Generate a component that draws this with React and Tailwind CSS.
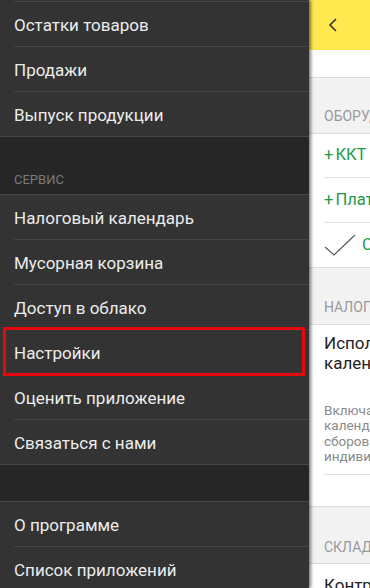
import React from "react";

const font = { fontFamily: "Roboto, 'Noto Sans', sans-serif" };

const Row = ({ children, last = false }) => (
  <div className="relative h-[45px]">
    <div className="h-[44px] flex items-center pl-[14px] pt-[3px] text-[17px] text-[#ececec]">
      {children}
    </div>
    {!last && <div className="ml-[14px] h-px bg-[#454545]" />}
  </div>
);

const Section = ({ height, label }) => (
  <div
    className={`${height} bg-[#262626] border-y border-[#484848] flex items-end pl-[14px] pb-[5px] text-[13px] text-[#7a7a7a]`}
  >
    {label}
  </div>
);

const App = () => {
  return (
    <div className="w-[370px] h-[588px] overflow-hidden flex bg-[#f2f2f2]" style={font}>
      {/* Drawer */}
      <div className="w-[309px] shrink-0 bg-[#333333] shadow-[2px_0_3px_rgba(0,0,0,0.5)] z-10">
        <div className="h-[2px] border-b border-[#454545] ml-[14px]" />
        <Row>Остатки товаров</Row>
        <Row>Продажи</Row>
        <div className="h-[44px] flex items-center pl-[14px] pt-[3px] text-[17px] text-[#ececec]">
          Выпуск продукции
        </div>
        <Section height="h-[59px]" label="СЕРВИС" />
        <Row>Налоговый календарь</Row>
        <Row>Мусорная корзина</Row>
        <Row>Доступ в облако</Row>
        <div className="relative h-[45px]">
          <div className="h-[44px] flex items-center pl-[14px] pt-[3px] text-[17px] text-[#ececec]">
            Настройки
          </div>
          <div className="absolute left-[3px] right-[4px] top-[-3px] bottom-[-1px] border-[3px] border-[#e5080f]" />
        </div>
        <Row>Оценить приложение</Row>
        <div className="h-[44px] flex items-center pl-[14px] pt-[3px] text-[17px] text-[#ececec]">
          Связаться с нами
        </div>
        <div className="h-[38px] bg-[#262626] border-y border-[#484848]" />
        <Row>О программе</Row>
        <Row last>Список приложений</Row>
      </div>

      {/* Right panel (clipped) */}
      <div className="flex-1 overflow-hidden">
        <div className="w-[360px]">
          <div className="h-[50px] bg-[#ffe94f] flex items-center pl-[18px]">
            <svg width="12" height="16" viewBox="0 0 12 16" fill="none">
              <path d="M9 2L3 8l6 6" stroke="#333" strokeWidth="1.6" />
            </svg>
          </div>
          <div className="h-[28px] bg-white border-b border-[#dcdcdc]" />
          <div className="h-[56px] flex items-end pl-[15px] pb-[6px] text-[14px] text-[#9a9a9a] border-b border-[#dcdcdc]">
            ОБОРУДОВАНИЕ
          </div>
          <div className="bg-white border-b border-[#dcdcdc]">
            <div className="ml-[15px] h-[44px] flex items-center text-[16.5px] text-[#1f9a4c] border-b border-[#e0e0e0]">
              <span className="mr-[2px]">+</span>ККТ
            </div>
            <div className="ml-[15px] h-[45px] flex items-center text-[16.5px] text-[#1f9a4c] border-b border-[#e0e0e0]">
              <span className="mr-[2px]">+</span>Платежный терминал
            </div>
            <div className="ml-[15px] h-[44px] flex items-center gap-[6px] text-[16.5px] text-[#1f9a4c]">
              <svg width="32" height="22" viewBox="0 0 32 22" fill="none">
                <path d="M1 13l9 8L31 1" stroke="#555" strokeWidth="1.1" />
              </svg>
              Сканер штрихкодов
            </div>
          </div>
          <div className="h-[57px] flex items-end pl-[15px] pb-[6px] text-[14px] text-[#9a9a9a] border-b border-[#dcdcdc]">
            НАЛОГИ
          </div>
          <div className="bg-white border-b border-[#dcdcdc] h-[182px]">
            <div className="ml-[15px] pt-[8px] pb-[10px] border-b border-[#e0e0e0]">
              <div className="text-[17px] leading-[20px] text-[#222]">
                Использовать налоговый
                <br />
                календарь
              </div>
              <div className="mt-[30px] text-[13.5px] leading-[15.3px] text-[#8a8a8a]">
                Включает напоминания
                <br />
                календаря об уплате налогов,
                <br />
                сборов и отчетности для
                <br />
                индивидуальных
              </div>
            </div>
          </div>
          <div className="h-[57px] flex items-end pl-[15px] pb-[5px] text-[14px] text-[#9a9a9a] border-b border-[#dcdcdc]">
            СКЛАД
          </div>
          <div className="bg-white h-[44px] pl-[15px] pt-[9px] text-[17px] text-[#222]">
            Контроль остатков
          </div>
        </div>
      </div>
    </div>
  );
};

export default App;
